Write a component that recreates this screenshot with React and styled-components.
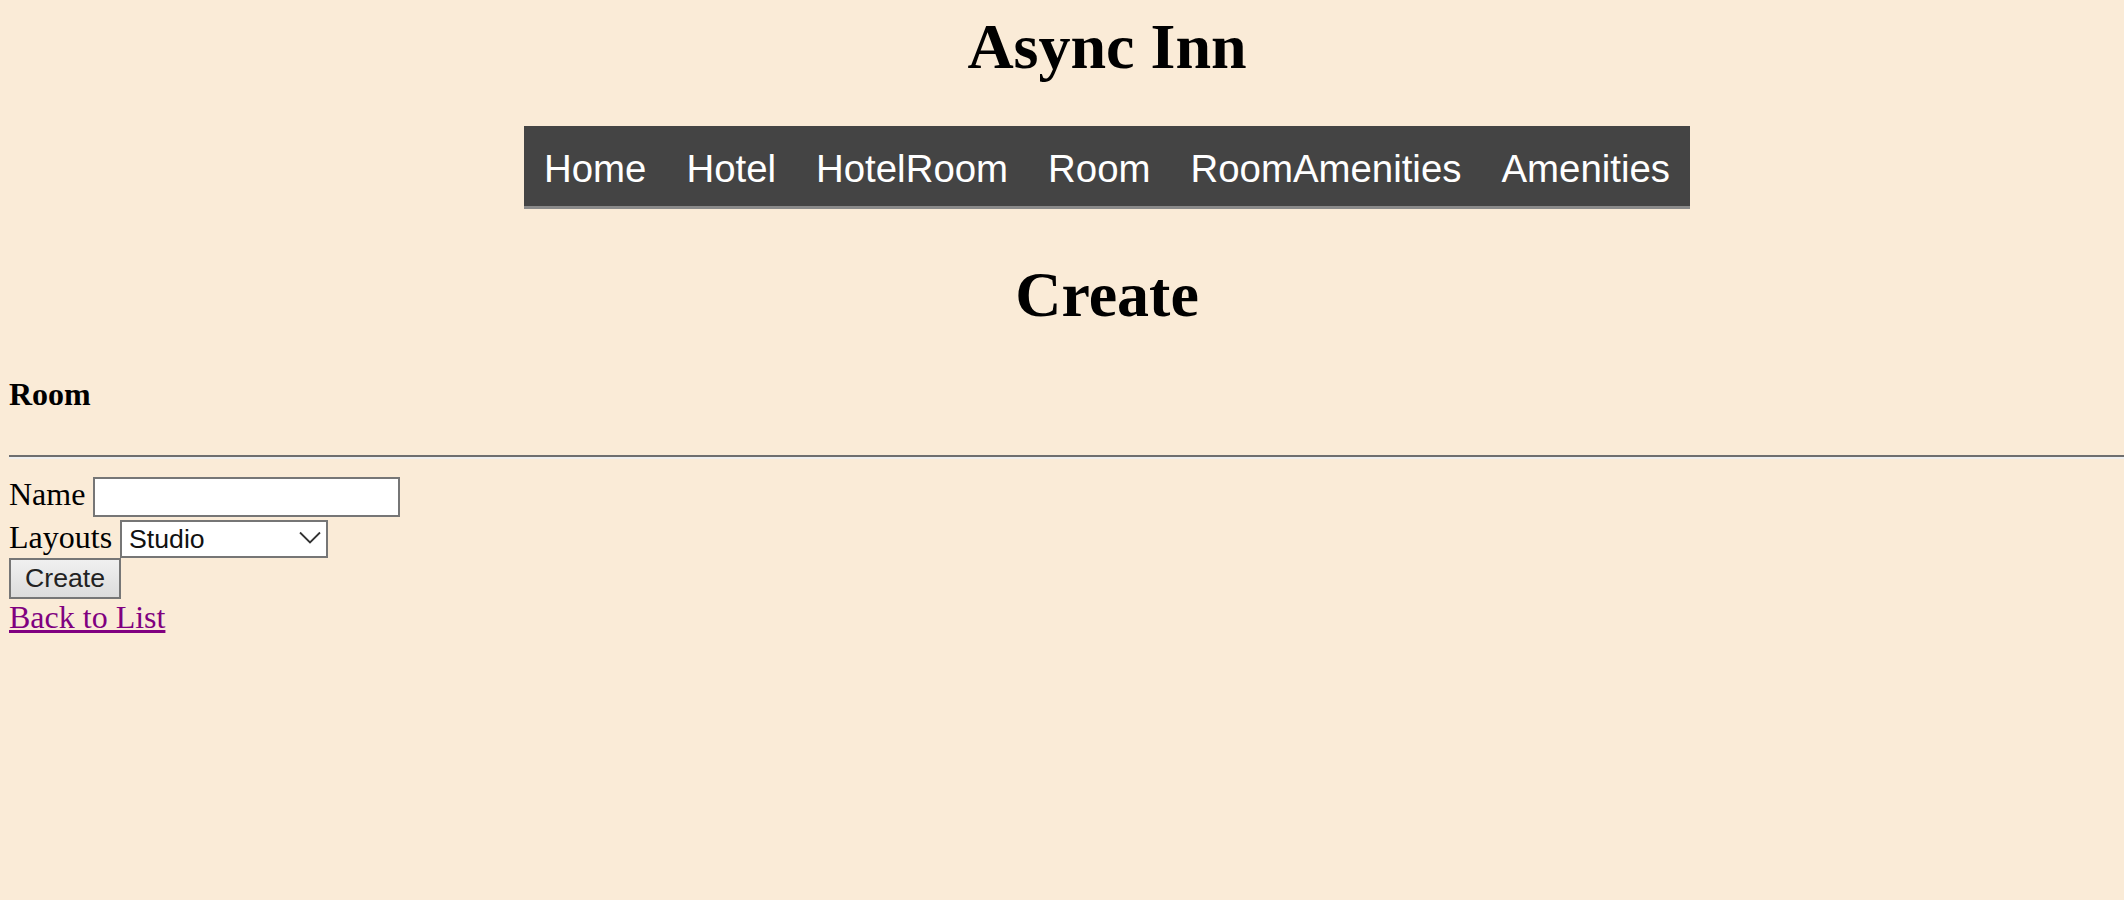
import React from "react";
import styled, { createGlobalStyle } from "styled-components";

const GlobalStyle = createGlobalStyle`
  html, body {
    margin: 0;
    background-color: #faebd7;
    overflow-x: hidden;
  }
  body {
    font-family: "Liberation Serif", "Times New Roman", serif;
    font-size: 32px;
    color: #000;
  }
`;

const Page = styled.div`
  width: 2196px;
  padding: 0 9px;
`;

const Heading = styled.h1`
  margin: ${(p) => p.$top}px 0 0;
  font-size: 64px;
  line-height: 72px;
  font-weight: bold;
  text-align: center;
`;

const NavWrap = styled.div`
  margin-top: 43px;
  text-align: center;
`;

const Nav = styled.nav`
  display: inline-flex;
  background-color: #444444;
  border-bottom: 3px solid #8a8a8a;
  padding: 21px 0 16px;
`;

const NavLink = styled.a`
  padding: 0 20px;
  font-family: "Liberation Sans", Arial, sans-serif;
  font-size: 38.4px;
  line-height: 43px;
  color: #fff;
  text-decoration: none;
`;

const SectionTitle = styled.h4`
  margin: 45px 0 0;
  font-size: 32px;
  line-height: 36px;
  font-weight: bold;
`;

const Divider = styled.hr`
  margin: 43px 0 0;
  height: 0;
  border: none;
  border-top: 2px solid #6e6e6e;
  border-bottom: 2px solid #eeeeee;
`;

const Field = styled.div`
  display: flex;
  align-items: baseline;
  gap: 8px;
  margin-top: ${(p) => p.$top}px;
`;

const Label = styled.label`
  line-height: 36px;
`;

const TextInput = styled.input`
  box-sizing: border-box;
  width: 307px;
  height: 40px;
  margin: 0;
  padding: 0 4px;
  border: 2px solid #767676;
  background: #fff;
  font-family: "Liberation Sans", Arial, sans-serif;
  font-size: 26.67px;
  outline: none;
`;

const SelectWrap = styled.span`
  position: relative;
  display: inline-block;
`;

const Select = styled.select`
  box-sizing: border-box;
  appearance: none;
  width: 208px;
  height: 38px;
  margin: 0;
  padding: 0 36px 0 7px;
  border: 2px solid #767676;
  border-radius: 0;
  background: #fff;
  color: #111;
  font-family: "Liberation Sans", Arial, sans-serif;
  font-size: 26.67px;
`;

const Chevron = styled.svg`
  position: absolute;
  right: 7px;
  top: 50%;
  transform: translateY(-50%);
  pointer-events: none;
`;

const SubmitButton = styled.button`
  display: block;
  box-sizing: border-box;
  width: 112px;
  height: 41px;
  margin: 0;
  padding: 0 14px;
  border: 2px solid #767676;
  background: linear-gradient(#f0f0f0, #dcdcdc);
  color: #222;
  font-family: "Liberation Sans", Arial, sans-serif;
  font-size: 26.67px;
`;

const BackLink = styled.a`
  display: inline-block;
  line-height: 36px;
  color: #800080;
  text-decoration: underline;
`;

const links = ["Home", "Hotel", "HotelRoom", "Room", "RoomAmenities", "Amenities"];

export default function App() {
  return (
    <>
      <GlobalStyle />
      <Page>
        <Heading $top={11}>Async Inn</Heading>
        <NavWrap>
          <Nav>
            {links.map((l) => (
              <NavLink key={l} href="#">
                {l}
              </NavLink>
            ))}
          </Nav>
        </NavWrap>
        <Heading $top={50}>Create</Heading>
        <SectionTitle>Room</SectionTitle>
        <Divider />
        <form onSubmit={(e) => e.preventDefault()}>
          <Field $top={17}>
            <Label htmlFor="name">Name</Label>
            <TextInput id="name" type="text" />
          </Field>
          <Field $top={2}>
            <Label htmlFor="layout">Layouts</Label>
            <SelectWrap>
              <Select id="layout" defaultValue="Studio">
                <option>Studio</option>
                <option>OneBedroom</option>
                <option>TwoBedroom</option>
              </Select>
              <Chevron width="22" height="13" viewBox="0 0 22 13">
                <polyline points="1,1 11,11 21,1" fill="none" stroke="#333" strokeWidth="1.8" />
              </Chevron>
            </SelectWrap>
          </Field>
          <SubmitButton type="submit">Create</SubmitButton>
        </form>
        <div>
          <BackLink href="#">Back to List</BackLink>
        </div>
      </Page>
    </>
  );
}
